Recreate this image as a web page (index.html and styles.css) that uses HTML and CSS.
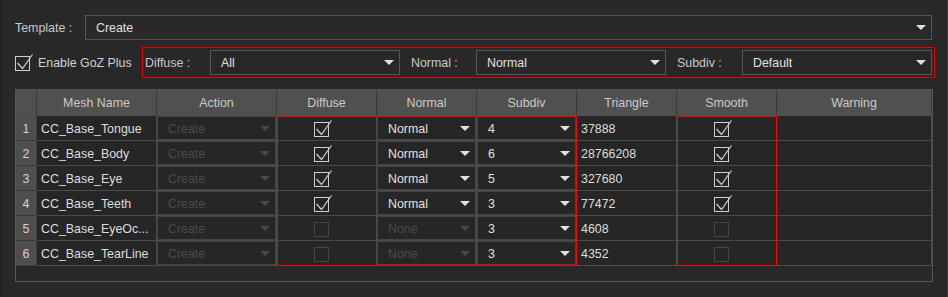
FILE: index.html
```html
<!DOCTYPE html>
<html>
<head>
<meta charset="utf-8">
<link rel="stylesheet" href="styles.css">
</head>
<body>
<div class="app">
  <div class="row1">
    <span class="lbl tpl-lbl">Template :</span>
    <div class="dd dd-wide"><span>Create</span><i class="arrow"></i></div>
  </div>
  <div class="row2">
    <label class="goz">
      <svg class="cb" width="19" height="19" viewBox="0 0 19 19"><rect x="0.5" y="3.5" width="14" height="14" fill="none" stroke="#cfcfcf"/><path d="M2.5 10 L7.5 15.5 L17.5 1.5" fill="none" stroke="#cfcfcf" stroke-width="1.2"/></svg>
      <span>Enable GoZ Plus</span>
    </label>
    <div class="redbox">
      <span class="lbl glbl">Diffuse :</span>
      <div class="dd dd-mid"><span>All</span><i class="arrow"></i></div>
      <span class="lbl glbl sp">Normal :</span>
      <div class="dd dd-mid"><span>Normal</span><i class="arrow"></i></div>
      <span class="lbl glbl sp">Subdiv :</span>
      <div class="dd dd-mid"><span>Default</span><i class="arrow"></i></div>
    </div>
  </div>
  <div class="frame">
    <div class="grid" id="grid">
      <div class="h"></div>
      <div class="h">Mesh Name</div>
      <div class="h">Action</div>
      <div class="h">Diffuse</div>
      <div class="h">Normal</div>
      <div class="h">Subdiv</div>
      <div class="h">Triangle</div>
      <div class="h">Smooth</div>
      <div class="h">Warning</div>

      <div class="num">1</div><div class="c txt">CC_Base_Tongue</div>
      <div class="c combo dis"><span>Create</span><i class="arrow"></i></div>
      <div class="c chk"><svg width="19" height="19" viewBox="0 0 19 19"><rect x="0.5" y="3.5" width="14" height="14" fill="none" stroke="#cfcfcf"/><path d="M2.5 10 L7.5 15.5 L17.5 1.5" fill="none" stroke="#cfcfcf" stroke-width="1.2"/></svg></div>
      <div class="c combo"><span>Normal</span><i class="arrow"></i></div>
      <div class="c combo"><span>4</span><i class="arrow"></i></div>
      <div class="c txt">37888</div>
      <div class="c chk"><svg width="19" height="19" viewBox="0 0 19 19"><rect x="0.5" y="3.5" width="14" height="14" fill="none" stroke="#cfcfcf"/><path d="M2.5 10 L7.5 15.5 L17.5 1.5" fill="none" stroke="#cfcfcf" stroke-width="1.2"/></svg></div>
      <div class="c"></div>

      <div class="num">2</div><div class="c txt">CC_Base_Body</div>
      <div class="c combo dis"><span>Create</span><i class="arrow"></i></div>
      <div class="c chk"><svg width="19" height="19" viewBox="0 0 19 19"><rect x="0.5" y="3.5" width="14" height="14" fill="none" stroke="#cfcfcf"/><path d="M2.5 10 L7.5 15.5 L17.5 1.5" fill="none" stroke="#cfcfcf" stroke-width="1.2"/></svg></div>
      <div class="c combo"><span>Normal</span><i class="arrow"></i></div>
      <div class="c combo"><span>6</span><i class="arrow"></i></div>
      <div class="c txt">28766208</div>
      <div class="c chk"><svg width="19" height="19" viewBox="0 0 19 19"><rect x="0.5" y="3.5" width="14" height="14" fill="none" stroke="#cfcfcf"/><path d="M2.5 10 L7.5 15.5 L17.5 1.5" fill="none" stroke="#cfcfcf" stroke-width="1.2"/></svg></div>
      <div class="c"></div>

      <div class="num">3</div><div class="c txt">CC_Base_Eye</div>
      <div class="c combo dis"><span>Create</span><i class="arrow"></i></div>
      <div class="c chk"><svg width="19" height="19" viewBox="0 0 19 19"><rect x="0.5" y="3.5" width="14" height="14" fill="none" stroke="#cfcfcf"/><path d="M2.5 10 L7.5 15.5 L17.5 1.5" fill="none" stroke="#cfcfcf" stroke-width="1.2"/></svg></div>
      <div class="c combo"><span>Normal</span><i class="arrow"></i></div>
      <div class="c combo"><span>5</span><i class="arrow"></i></div>
      <div class="c txt">327680</div>
      <div class="c chk"><svg width="19" height="19" viewBox="0 0 19 19"><rect x="0.5" y="3.5" width="14" height="14" fill="none" stroke="#cfcfcf"/><path d="M2.5 10 L7.5 15.5 L17.5 1.5" fill="none" stroke="#cfcfcf" stroke-width="1.2"/></svg></div>
      <div class="c"></div>

      <div class="num">4</div><div class="c txt">CC_Base_Teeth</div>
      <div class="c combo dis"><span>Create</span><i class="arrow"></i></div>
      <div class="c chk"><svg width="19" height="19" viewBox="0 0 19 19"><rect x="0.5" y="3.5" width="14" height="14" fill="none" stroke="#cfcfcf"/><path d="M2.5 10 L7.5 15.5 L17.5 1.5" fill="none" stroke="#cfcfcf" stroke-width="1.2"/></svg></div>
      <div class="c combo"><span>Normal</span><i class="arrow"></i></div>
      <div class="c combo"><span>3</span><i class="arrow"></i></div>
      <div class="c txt">77472</div>
      <div class="c chk"><svg width="19" height="19" viewBox="0 0 19 19"><rect x="0.5" y="3.5" width="14" height="14" fill="none" stroke="#cfcfcf"/><path d="M2.5 10 L7.5 15.5 L17.5 1.5" fill="none" stroke="#cfcfcf" stroke-width="1.2"/></svg></div>
      <div class="c"></div>

      <div class="num">5</div><div class="c txt">CC_Base_EyeOc...</div>
      <div class="c combo dis"><span>Create</span><i class="arrow"></i></div>
      <div class="c chk"><svg width="19" height="19" viewBox="0 0 19 19"><rect x="0.5" y="3.5" width="14" height="14" fill="none" stroke="#454545"/></svg></div>
      <div class="c combo dis"><span>None</span><i class="arrow"></i></div>
      <div class="c combo"><span>3</span><i class="arrow"></i></div>
      <div class="c txt">4608</div>
      <div class="c chk"><svg width="19" height="19" viewBox="0 0 19 19"><rect x="0.5" y="3.5" width="14" height="14" fill="none" stroke="#454545"/></svg></div>
      <div class="c"></div>

      <div class="num">6</div><div class="c txt">CC_Base_TearLine</div>
      <div class="c combo dis"><span>Create</span><i class="arrow"></i></div>
      <div class="c chk"><svg width="19" height="19" viewBox="0 0 19 19"><rect x="0.5" y="3.5" width="14" height="14" fill="none" stroke="#454545"/></svg></div>
      <div class="c combo dis"><span>None</span><i class="arrow"></i></div>
      <div class="c combo"><span>3</span><i class="arrow"></i></div>
      <div class="c txt">4352</div>
      <div class="c chk"><svg width="19" height="19" viewBox="0 0 19 19"><rect x="0.5" y="3.5" width="14" height="14" fill="none" stroke="#454545"/></svg></div>
      <div class="c"></div>

      <div class="mark mark-a"></div>
      <div class="mark mark-b"></div>
    </div>
  </div>
</div>
</body>
</html>
```

FILE: styles.css
```css
* { box-sizing: border-box; }
html, body { margin: 0; padding: 0; }
body {
  background: #282828;
  font-family: "Liberation Sans", Arial, sans-serif;
  font-size: 12.4px;
  line-height: 14px;
  color: #d6d6d6;
  width: 948px;
  height: 297px;
  overflow: hidden;
}
.app {
  width: 948px;
  height: 297px;
  padding: 15px 15px 0 14px;
  border-left: 1px solid #1e1e1e;
  border-right: 1px solid #3a3a3a;
}
.row1 {
  display: flex;
  align-items: center;
  height: 25px;
}
.lbl { color: #c8c8c8; white-space: nowrap; }
.tpl-lbl { width: 70px; }
.dd {
  height: 25px;
  border: 1px solid #555;
  background: #282828;
  display: flex;
  align-items: center;
  justify-content: space-between;
  padding: 0 5px 0 10px;
  color: #e0e0e0;
}
.dd-wide { flex: 1; }
.dd-mid { width: 190px; }
.arrow {
  display: block;
  width: 0;
  height: 0;
  border-left: 5px solid transparent;
  border-right: 5px solid transparent;
  border-top: 5px solid #e0e0e0;
}
.row2 {
  display: flex;
  align-items: center;
  height: 31px;
  margin-top: 7px;
  margin-right: -3px;
}
.goz {
  width: 128px;
  display: flex;
  align-items: center;
  gap: 4px;
  color: #d2d2d2;
}
.goz .cb { margin-top: 0; }
.redbox {
  display: flex;
  align-items: center;
  height: 31px;
  border: 1px solid #e60000;
  padding: 2px;
}
.glbl { width: 65px; }
.sp { margin-left: 11px; }
.frame {
  margin-top: 11px;
  width: 918px;
  height: 193px;
  border: 1px solid #555;
  background: #282828;
}
.grid {
  position: relative;
  display: grid;
  grid-template-columns: 21px 120px 120px 100px 100px 100px 100px 100px 155px;
  grid-template-rows: 26px repeat(6, 25px);
}
.h {
  background: #505050;
  border-right: 1px solid #3a3a3a;
  color: #cacaca;
  display: flex;
  align-items: center;
  justify-content: center;
}
.num {
  background: #4e4e4e;
  border-bottom: 1px solid #3c3c3c;
  border-right: 1px solid #3c3c3c;
  color: #d4d4d4;
  display: flex;
  align-items: center;
  justify-content: center;
  padding-top: 1px;
}
.c {
  background: #262626;
  border-right: 1px solid #4a4a4a;
  border-bottom: 1px solid #4a4a4a;
  display: flex;
  align-items: center;
  white-space: nowrap;
  overflow: hidden;
}
.txt { padding-left: 4px; padding-top: 1px; color: #dedede; }
.combo {
  justify-content: space-between;
  padding: 1px 6px 0 11px;
  color: #e0e0e0;
  box-shadow: inset 1px 1px 0 #444, inset -1px -1px 0 #444;
}
.combo.dis { color: #4a4a4a; }
.combo.dis .arrow { border-top-color: #474747; }
.chk { justify-content: center; padding-right: 6px; }
.mark {
  position: absolute;
  z-index: 2;
  top: 26px;
  height: 150px;
  border: 1px solid #ff0000;
  pointer-events: none;
}
.mark-a { left: 261px; width: 300px; }
.mark-b { left: 661px; width: 100px; }
```
